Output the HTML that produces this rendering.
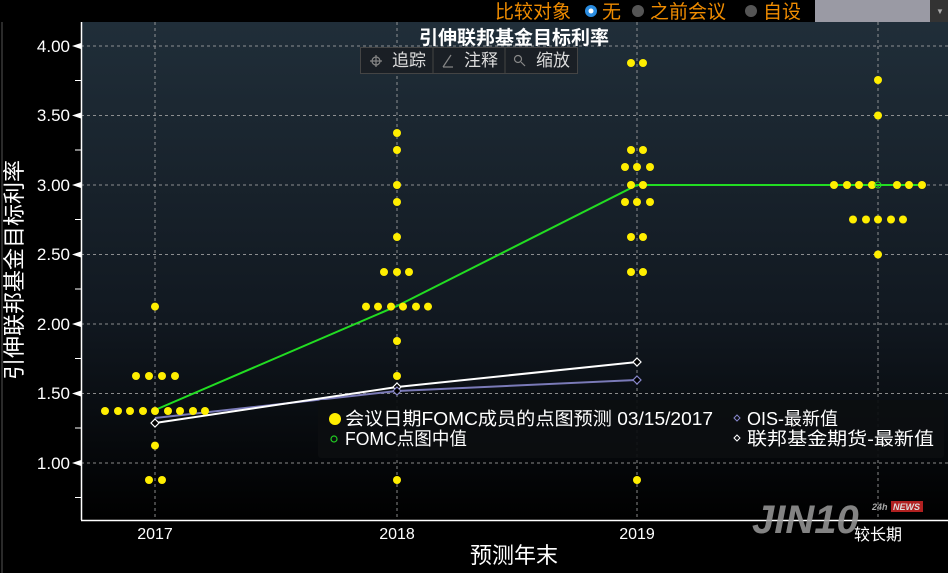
<!DOCTYPE html>
<html><head><meta charset="utf-8"><style>
html,body{margin:0;padding:0;background:#000;}
body{width:948px;height:573px;overflow:hidden;position:relative;font-family:"Liberation Sans","Noto Sans CJK SC",sans-serif;}
</style></head><body>
<svg width="948" height="573" xmlns="http://www.w3.org/2000/svg" style="position:absolute;left:0;top:0">
<defs>
<linearGradient id="bg" x1="0" y1="0" x2="0" y2="1">
<stop offset="0" stop-color="#202e39"/><stop offset="0.6" stop-color="#111820"/><stop offset="1" stop-color="#000"/>
</linearGradient>
</defs>
<rect x="0" y="0" width="948" height="573" fill="#000"/>
<rect x="81" y="22" width="867" height="498" fill="url(#bg)"/>
<line x1="2" y1="22" x2="2" y2="573" stroke="#555" stroke-width="1"/>
<rect x="815" y="0" width="115" height="22" fill="#9a9aa4"/>
<rect x="930" y="0" width="18" height="22" fill="#333"/>
<text x="936" y="14" font-size="8" fill="#aaa">▼</text>
<g font-size="19" fill="#f08c00">
<text x="495" y="18">比较对象</text>
<text x="602" y="18">无</text>
<text x="650" y="18">之前会议</text>
<text x="763" y="18">自设</text>
</g>
<circle cx="591" cy="11" r="6" fill="#2a8ce0"/><circle cx="591" cy="11" r="2.5" fill="#fff"/>
<circle cx="638" cy="11" r="6" fill="#555"/>
<circle cx="751" cy="11" r="6" fill="#555"/>
<g stroke="#aaa" stroke-width="1" stroke-dasharray="3,3" opacity="0.8">
<line x1="81" y1="46" x2="948" y2="46"/><line x1="81" y1="115.5" x2="948" y2="115.5"/>
<line x1="81" y1="185" x2="948" y2="185"/><line x1="81" y1="254.5" x2="948" y2="254.5"/>
<line x1="81" y1="324" x2="948" y2="324"/><line x1="81" y1="393.5" x2="948" y2="393.5"/>
<line x1="81" y1="463" x2="948" y2="463"/>
<line x1="155" y1="22" x2="155" y2="520"/><line x1="397" y1="22" x2="397" y2="520"/>
<line x1="637" y1="22" x2="637" y2="520"/><line x1="878" y1="22" x2="878" y2="520"/>
</g>
<line x1="81.5" y1="22" x2="81.5" y2="520" stroke="#fff" stroke-width="1.5"/>
<line x1="81" y1="520.5" x2="948" y2="520.5" stroke="#fff" stroke-width="1.5"/>
<g fill="#fff">
<polygon points="72,46 81,43 81,49"/><polygon points="72,115.5 81,112.5 81,118.5"/>
<polygon points="72,185 81,182 81,188"/><polygon points="72,254.5 81,251.5 81,257.5"/>
<polygon points="72,324 81,321 81,327"/><polygon points="72,393.5 81,390.5 81,396.5"/>
<polygon points="72,463 81,460 81,466"/>
</g>
<g stroke="#fff"><line x1="75" y1="80.5" x2="81" y2="80.5"/><line x1="75" y1="150" x2="81" y2="150"/><line x1="75" y1="219.5" x2="81" y2="219.5"/><line x1="75" y1="289" x2="81" y2="289"/><line x1="75" y1="358.5" x2="81" y2="358.5"/><line x1="75" y1="428" x2="81" y2="428"/><line x1="75" y1="497.5" x2="81" y2="497.5"/></g>
<g font-size="17" fill="#fff" text-anchor="end">
<text x="70" y="52">4.00</text><text x="70" y="121">3.50</text><text x="70" y="191">3.00</text>
<text x="70" y="260">2.50</text><text x="70" y="330">2.00</text><text x="70" y="399">1.50</text><text x="70" y="469">1.00</text>
</g>
<g font-size="16" fill="#fff" text-anchor="middle">
<text x="155" y="539">2017</text><text x="397" y="539">2018</text><text x="637" y="539">2019</text><text x="878" y="540">较长期</text>
</g>
<text x="514" y="563" font-size="22" fill="#fff" text-anchor="middle">预测年末</text>
<text transform="translate(22,270) rotate(-90)" font-size="22" fill="#fff" text-anchor="middle">引伸联邦基金目标利率</text>
<text x="514" y="44" font-size="19" font-weight="bold" fill="#fff" text-anchor="middle">引伸联邦基金目标利率</text>
<rect x="360.5" y="47.5" width="217" height="26" fill="#1a1f25" stroke="#444"/>
<line x1="433" y1="48" x2="433" y2="73" stroke="#444"/><line x1="505" y1="48" x2="505" y2="73" stroke="#444"/>
<g font-size="17" fill="#ddd"><text x="392" y="66">追踪</text><text x="464" y="66">注释</text><text x="536" y="66">缩放</text></g>
<g stroke="#888" fill="none" stroke-width="1.2"><circle cx="376" cy="61" r="4"/><line x1="370" y1="61" x2="382" y2="61"/><line x1="376" y1="55" x2="376" y2="67"/>
<line x1="443" y1="67" x2="451" y2="55"/><line x1="443" y1="67" x2="453" y2="67"/>
<circle cx="518" cy="59" r="3.5"/><line x1="521" y1="62" x2="525" y2="66"/></g>
<polyline points="155,418 397,391 637,380" fill="none" stroke="#7a7ab8" stroke-width="2"/>
<polyline points="155,423 397,387 637,362" fill="none" stroke="#fff" stroke-width="2"/>
<polyline points="155,410 397,306 637,185 925,185" fill="none" stroke="#22dd22" stroke-width="2"/>
<g fill="none" stroke-width="1.2">
<polygon points="155,419 159,423 155,427 151,423" stroke="#fff" fill="#000"/>
<polygon points="397,383 401,387 397,391 393,387" stroke="#fff" fill="#000"/>
<polygon points="637,358 641,362 637,366 633,362" stroke="#fff" fill="#000"/>
<polygon points="397,387 401,391 397,395 393,391" stroke="#8888cc" fill="#000"/>
<polygon points="637,376 641,380 637,384 633,380" stroke="#8888cc" fill="#000"/>
</g>
<g fill="#ffee00">
<circle cx="155" cy="306.6" r="4"/>
<circle cx="136" cy="376" r="4"/><circle cx="149" cy="376" r="4"/><circle cx="162" cy="376" r="4"/><circle cx="175" cy="376" r="4"/>
<circle cx="105" cy="411" r="4"/><circle cx="118" cy="411" r="4"/><circle cx="130" cy="411" r="4"/><circle cx="143" cy="411" r="4"/><circle cx="155" cy="411" r="4"/><circle cx="168" cy="411" r="4"/><circle cx="180" cy="411" r="4"/><circle cx="193" cy="411" r="4"/><circle cx="205" cy="411" r="4"/>
<circle cx="155" cy="445.6" r="4"/><circle cx="149" cy="480" r="4"/><circle cx="162" cy="480" r="4"/>
<circle cx="397" cy="133" r="4"/><circle cx="397" cy="150" r="4"/><circle cx="397" cy="185" r="4"/><circle cx="397" cy="202" r="4"/><circle cx="397" cy="237" r="4"/>
<circle cx="384" cy="272" r="4"/><circle cx="397" cy="272" r="4"/><circle cx="409" cy="272" r="4"/>
<circle cx="366" cy="306.6" r="4"/><circle cx="378" cy="306.6" r="4"/><circle cx="391" cy="306.6" r="4"/><circle cx="403" cy="306.6" r="4"/><circle cx="416" cy="306.6" r="4"/><circle cx="428" cy="306.6" r="4"/>
<circle cx="397" cy="341" r="4"/><circle cx="397" cy="376" r="4"/><circle cx="397" cy="480" r="4"/>
<circle cx="631" cy="63" r="4"/><circle cx="643" cy="63" r="4"/>
<circle cx="631" cy="150" r="4"/><circle cx="643" cy="150" r="4"/>
<circle cx="625" cy="167" r="4"/><circle cx="637" cy="167" r="4"/><circle cx="650" cy="167" r="4"/>
<circle cx="631" cy="185" r="4"/><circle cx="643" cy="185" r="4"/>
<circle cx="625" cy="202" r="4"/><circle cx="637" cy="202" r="4"/><circle cx="650" cy="202" r="4"/>
<circle cx="631" cy="237" r="4"/><circle cx="643" cy="237" r="4"/>
<circle cx="631" cy="272" r="4"/><circle cx="643" cy="272" r="4"/><circle cx="637" cy="480" r="4"/>
<circle cx="878" cy="80" r="4"/><circle cx="878" cy="115.5" r="4"/>
<circle cx="834" cy="185" r="4"/><circle cx="847" cy="185" r="4"/><circle cx="859" cy="185" r="4"/><circle cx="872" cy="185" r="4"/><circle cx="897" cy="185" r="4"/><circle cx="909" cy="185" r="4"/><circle cx="922" cy="185" r="4"/>
<circle cx="853" cy="219.5" r="4"/><circle cx="866" cy="219.5" r="4"/><circle cx="878" cy="219.5" r="4"/><circle cx="891" cy="219.5" r="4"/><circle cx="903" cy="219.5" r="4"/>
<circle cx="878" cy="254.5" r="4"/>
</g>
<circle cx="878" cy="185" r="3" fill="none" stroke="#22dd22"/>
<rect x="318" y="400" width="626" height="58" rx="3" fill="#0c0e10" opacity="0.92"/>
<circle cx="335" cy="419" r="6" fill="#ffee00"/>
<circle cx="334" cy="439" r="3" fill="none" stroke="#22cc22" stroke-width="1.2"/>
<g font-size="18" fill="#fff"><text x="345" y="425" textLength="368" lengthAdjust="spacingAndGlyphs">会议日期FOMC成员的点图预测 03/15/2017</text><text x="345" y="445" textLength="122" lengthAdjust="spacingAndGlyphs">FOMC点图中值</text>
<text x="747" y="425">OIS-最新值</text><text x="747" y="445" textLength="187" lengthAdjust="spacingAndGlyphs">联邦基金期货-最新值</text></g>
<polygon points="737,415 740,418 737,421 734,418" fill="none" stroke="#8888cc"/>
<polygon points="737,435 740,438 737,441 734,438" fill="none" stroke="#fff"/>
<text x="752" y="533" font-size="40" font-weight="bold" font-style="italic" fill="#9a9a9a" opacity="0.85">JIN10</text>
<text x="872" y="510" font-size="9" font-style="italic" font-weight="bold" fill="#aaa">24h</text>
<rect x="891" y="501" width="32" height="11" fill="#b02020"/>
<text x="893" y="510" font-size="9" font-weight="bold" font-style="italic" fill="#ddd">NEWS</text>
</svg>
</body></html>
